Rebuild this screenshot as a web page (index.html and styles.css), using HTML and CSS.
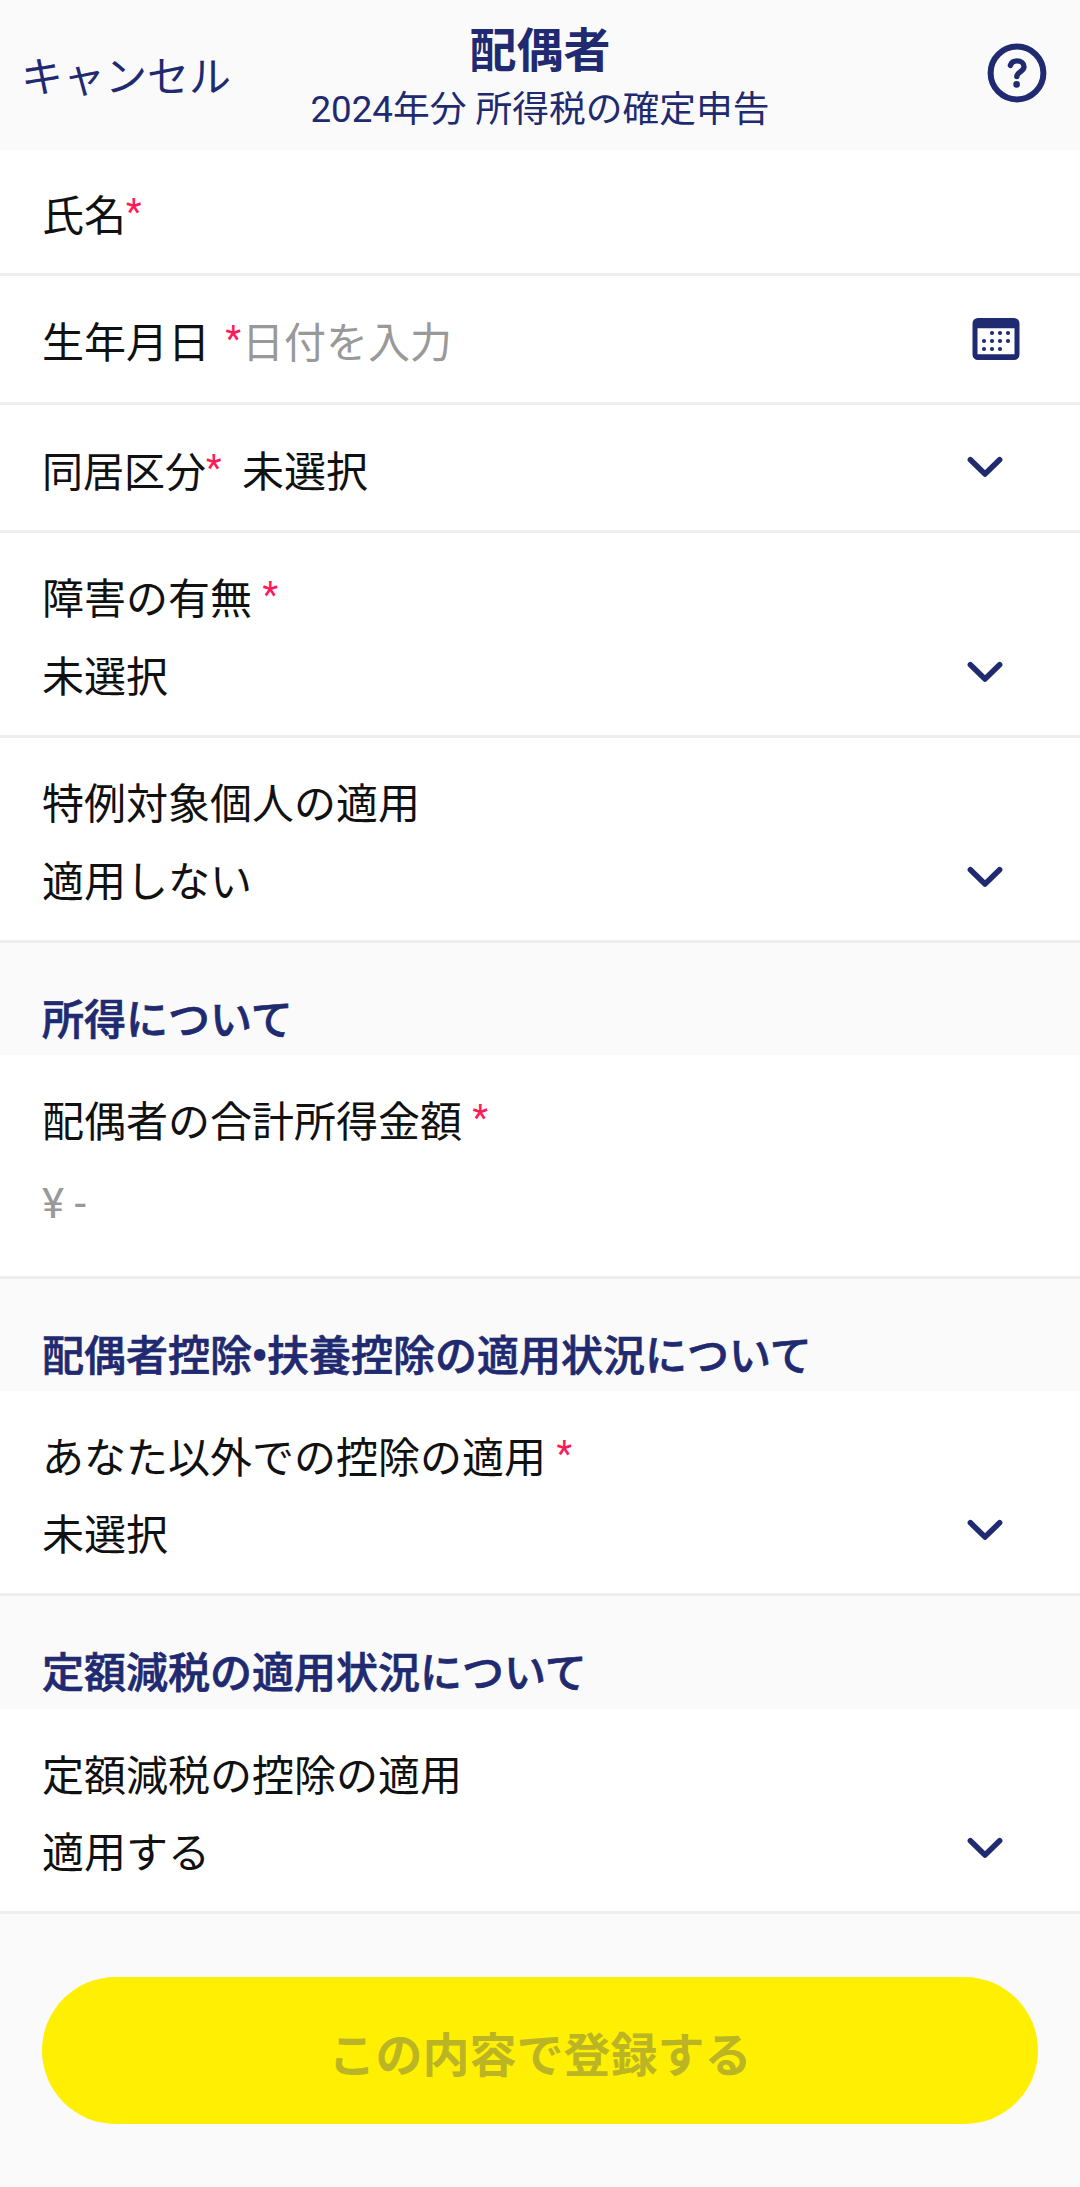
FILE: index.html
```html
<!DOCTYPE html>
<html lang="ja">
<head>
  <meta charset="UTF-8">
  <meta name="viewport" content="width=device-width, initial-scale=1">
  <title>配偶者</title>
  <link rel="stylesheet" href="styles.css">
</head>
<body>
  <header class="header">
    <a class="cancel">キャンセル</a>
    <div class="header-title">
      <h1>配偶者</h1>
      <p>2024年分 所得税の確定申告</p>
    </div>
    <svg class="help" width="60" height="60" viewBox="0 0 60 60" fill="none" stroke="#1f2a70">
      <circle cx="30" cy="30" r="26.4" stroke-width="6"/>
      <path d="M23.4 22.4 C24.4 19.3 27 17.9 30 17.9 C34 17.9 37 20.2 37 23.7 C37 28.5 29.8 29.2 29.8 33.6" stroke-width="5.4" stroke-linecap="round"/>
      <circle cx="29.6" cy="41.4" r="3.3" fill="#1f2a70" stroke="none"/>
    </svg>
  </header>

  <form>
    <div class="row row-first">
      <div class="label">氏名<span class="req">*</span></div>
    </div>

    <div class="row inline">
      <div class="label">生年月日<span class="req req-far">*</span></div>
      <div class="value placeholder">日付を入力</div>
      <svg class="calendar" width="48" height="42" viewBox="0 0 48 42" fill="#1f2a70">
        <path fill-rule="evenodd" d="M6 0h36a5.5 5.5 0 0 1 5.5 5.5v31a5.5 5.5 0 0 1-5.5 5.5h-36a5.5 5.5 0 0 1-5.5-5.5v-31a5.5 5.5 0 0 1 5.5-5.5z M5.5 10.3v26h37v-26z"/>
        <circle cx="20" cy="15" r="2.1"/><circle cx="28" cy="15" r="2.1"/><circle cx="36" cy="15" r="2.1"/>
        <circle cx="12" cy="23" r="2.1"/><circle cx="20" cy="23" r="2.1"/><circle cx="28" cy="23" r="2.1"/><circle cx="36" cy="23" r="2.1"/>
        <circle cx="12" cy="31" r="2.1"/><circle cx="20" cy="31" r="2.1"/><circle cx="28" cy="31" r="2.1"/>
      </svg>
    </div>

    <div class="row inline">
      <div class="label label-narrow">同居区分<span class="req">*</span></div>
      <div class="value">未選択</div>
      <svg class="chevron" width="36" height="22" viewBox="0 0 36 22"><path d="M3.4 3.8 L18 18 L32.6 3.8"/></svg>
    </div>

    <div class="row double">
      <div class="label">障害の有無 <span class="req">*</span></div>
      <div class="select">
        <div class="value">未選択</div>
        <svg class="chevron" width="36" height="22" viewBox="0 0 36 22"><path d="M3.4 3.8 L18 18 L32.6 3.8"/></svg>
      </div>
    </div>

    <div class="row double">
      <div class="label">特例対象個人の適用</div>
      <div class="select">
        <div class="value">適用しない</div>
        <svg class="chevron" width="36" height="22" viewBox="0 0 36 22"><path d="M3.4 3.8 L18 18 L32.6 3.8"/></svg>
      </div>
    </div>

    <h2>所得について</h2>
    <div class="row amount">
      <div class="label">配偶者の合計所得金額 <span class="req">*</span></div>
      <div class="value placeholder">¥ -</div>
    </div>

    <h2>配偶者控除<span class="dot">•</span>扶養控除の適用状況について</h2>
    <div class="row double section-first">
      <div class="label">あなた以外での控除の適用 <span class="req">*</span></div>
      <div class="select">
        <div class="value">未選択</div>
        <svg class="chevron" width="36" height="22" viewBox="0 0 36 22"><path d="M3.4 3.8 L18 18 L32.6 3.8"/></svg>
      </div>
    </div>

    <h2 class="last">定額減税の適用状況について</h2>
    <div class="row double section-first">
      <div class="label">定額減税の控除の適用</div>
      <div class="select">
        <div class="value">適用する</div>
        <svg class="chevron" width="36" height="22" viewBox="0 0 36 22"><path d="M3.4 3.8 L18 18 L32.6 3.8"/></svg>
      </div>
    </div>

    <div class="footer">
      <button type="button" disabled>この内容で登録する</button>
    </div>
  </form>
</body>
</html>
```
FILE: styles.css
```css
* {
  box-sizing: border-box;
}
body {
  margin: 0;
  background-color: #fafafa;
  color: #111;
  font-family: Roboto, "Noto Sans CJK JP", sans-serif;
  font-size: 42px;
  line-height: 60px;
}
h1, h2, p {
  margin: 0;
}
.header {
  display: grid;
  grid-template-columns: 250px 1fr 250px;
  height: 150px;
  padding: 0 21px;
  color: #1f2a70;
}
.cancel {
  padding-top: 48px;
}
.header-title {
  text-align: center;
  padding-top: 21px;
}
.header-title h1 {
  font-size: 47px;
}
.header-title p {
  font-size: 36.75px;
  line-height: 58px;
  white-space: nowrap;
}
.help {
  justify-self: end;
  margin: 43px 12px 0 0;
}
.row {
  background-color: white;
  border-bottom: 3px solid #eee;
  padding: 38px 42px 0;
}
.row-first {
  height: 126px;
  padding-top: 37px;
}
.inline {
  display: flex;
  height: 128.5px;
}
.inline .label {
  width: 200px;
  white-space: nowrap;
}
.double {
  height: 205px;
  padding-top: 37px;
}
.section-first {
  padding-top: 38px;
}
.amount {
  height: 224px;
}
.amount .value {
  margin-top: 21px;
}
.select {
  display: flex;
  margin-top: 18px;
}
.section-first .select {
  margin-top: 17px;
}
.label-narrow {
  font-size: 41px;
}
.req {
  color: #ff1a58;
  font-size: 36px;
  line-height: 1;
  vertical-align: 7px;
}
.req-far {
  margin-left: 15.5px;
}
.placeholder {
  color: #999;
}
.chevron {
  margin: 13px 35px 0 auto;
  fill: none;
  stroke: #1f2a70;
  stroke-width: 5.6;
  stroke-linecap: round;
  stroke-linejoin: round;
}
.calendar {
  margin: 4px 18px 0 auto;
}
h2 {
  height: 112px;
  padding: 48px 42px 0;
  font-size: 42px;
  font-weight: 500;
  color: #1f2a70;
  -webkit-text-stroke: 0.7px #1f2a70;
}
h2.last {
  height: 113px;
}
.dot {
  font-weight: bold;
  -webkit-text-stroke: 1.5px #1f2a70;
}
.footer {
  padding: 63px 42px;
}
button {
  display: block;
  width: 100%;
  height: 147px;
  padding: 1px 0 0;
  border: none;
  border-radius: 74px;
  background-color: #fff003;
  color: #bbb523;
  font-family: inherit;
  font-size: 47px;
  font-weight: bold;
}
```
